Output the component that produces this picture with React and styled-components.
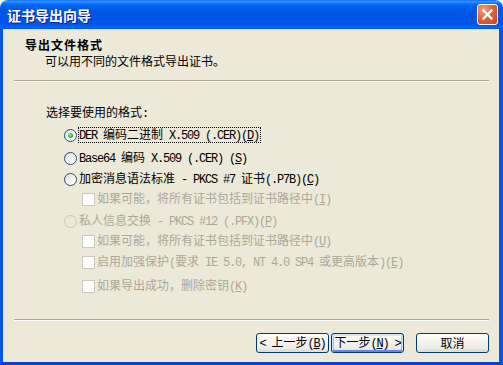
import React from 'react'
import styled, { createGlobalStyle } from 'styled-components'

const GlobalStyle = createGlobalStyle`
  html, body {
    margin: 0;
    padding: 0;
    background: #fff;
  }
  body {
    font-family: "Noto Sans CJK SC", sans-serif;
    font-size: 12px;
  }
`

const CJK = /([\u2e80-\u9fff\u3000-\u303f\uff00-\uffef]+)/

const Latin = styled.span`
  font-family: "Liberation Mono", "Noto Sans CJK SC", monospace;
  font-size: 12px;
  letter-spacing: -1.2px;
`

const mixed = (str) =>
  str
    .split(CJK)
    .filter(Boolean)
    .map((part, i) =>
      CJK.test(part) ? <span key={i}>{part}</span> : <Latin key={i}>{part}</Latin>
    )

// "&X" marks the mnemonic letter, like a Windows resource string
const Caption = ({ text }) => {
  const i = text.indexOf('&')
  if (i < 0) return <>{mixed(text)}</>
  return (
    <>
      {mixed(text.slice(0, i))}
      <u>{mixed(text[i + 1])}</u>
      {mixed(text.slice(i + 2))}
    </>
  )
}

const Window = styled.div`
  width: 503px;
  height: 365px;
  display: flex;
  flex-direction: column;
  border-radius: 8px 8px 0 0;
  overflow: hidden;
`

const TitleBar = styled.div`
  height: 29px;
  flex: none;
  display: flex;
  align-items: center;
  justify-content: space-between;
  padding: 0 5px 0 7px;
  background: linear-gradient(
    to bottom,
    #0058ee 0px,
    #3a93ff 1px,
    #288eff 2px,
    #127dff 3px,
    #036ffc 4px,
    #0262ee 6px,
    #0057e5 10px,
    #0054e3 18px,
    #0055eb 24px,
    #005bf5 26px,
    #026afe 27px,
    #0062ef 28px,
    #0052d6 29px
  );
`

const Title = styled.span`
  color: #fff;
  font-weight: bold;
  font-size: 14px;
  line-height: 18px;
  text-shadow: 1px 1px 0 #0a1e8c;
`

const CloseButton = styled.div`
  width: 21px;
  height: 21px;
  box-sizing: border-box;
  border: 1px solid #fff;
  border-radius: 3px;
  display: flex;
  align-items: center;
  justify-content: center;
  background: radial-gradient(circle at 30% 25%, #f0a085 0%, #e2643f 45%, #c8401c 100%);
`

const Body = styled.div`
  flex: 1;
  display: flex;
  flex-direction: column;
  background: #ece9d8;
  border-left: 3px solid #0855e5;
  border-right: 4px solid #0855e5;
  border-bottom: 3px solid #0843cf;
`

const Header = styled.div`
  padding: 8px 0 0 22px;
  line-height: 16px;
`

const HeaderTitle = styled.div`
  font-weight: bold;
  letter-spacing: 1px;
`

const HeaderSub = styled.div`
  padding-left: 20px;
`

const Separator = styled.div`
  height: 0;
  border-top: 1px solid #aca899;
  border-bottom: 1px solid #fff;
  margin: ${(p) => p.$mt}px 10px 0 11px;
`

const Content = styled.div`
  display: flex;
  flex-direction: column;
  padding-top: 22px;
`

const GroupLabel = styled.div`
  height: 16px;
  line-height: 16px;
  padding-left: 43px;
`

const Row = styled.div`
  display: flex;
  align-items: center;
  gap: 2px;
  height: 16px;
  line-height: 16px;
  white-space: nowrap;
  margin-top: ${(p) => p.$mt}px;
  padding-left: ${(p) => p.$indent}px;
  color: ${(p) => (p.$disabled ? '#aca899' : '#000')};
`

const RadioCircle = styled.span`
  position: relative;
  flex: none;
  width: 13px;
  height: 13px;
  box-sizing: border-box;
  border-radius: 50%;
  border: 1px solid ${(p) => (p.$disabled ? '#cac8bb' : '#1c5180')};
  background: ${(p) =>
    p.$disabled ? '#ece9d8' : 'linear-gradient(135deg, #dcdcd7 0%, #ffffff 75%)'};

  &::after {
    content: '';
    display: ${(p) => (p.$checked ? 'block' : 'none')};
    position: absolute;
    left: 3px;
    top: 3px;
    width: 5px;
    height: 5px;
    border-radius: 50%;
    background: radial-gradient(circle at 40% 40%, #a8eda8 0%, #2fb62f 55%, #1a8a1a 100%);
  }
`

const CheckBox = styled.span`
  flex: none;
  width: 13px;
  height: 13px;
  box-sizing: border-box;
  border: 1px solid ${(p) => (p.$disabled ? '#cac8bb' : '#1c5180')};
  background: #fff;
`

const Text = styled.span`
  display: inline-block;
  line-height: 11px;
  border: 1px solid transparent;
  margin-left: -1px;
  padding: 0 1px 0 0;
  border-color: ${(p) => (p.$focus ? '#000' : 'transparent')};
  border-style: dotted;
`

const Footer = styled.div`
  margin-top: auto;
  display: flex;
  flex-direction: column;
  padding-bottom: 9px;
`

const Buttons = styled.div`
  display: flex;
  justify-content: flex-end;
  gap: 2px;
  margin-top: 12px;
  padding-right: 10px;
`

const Button = styled.button`
  width: 73px;
  height: 20px;
  box-sizing: border-box;
  padding: 0;
  margin-left: ${(p) => p.$ml || 0}px;
  border: 1px solid #003c74;
  border-radius: 3px;
  font-family: inherit;
  font-size: 12px;
  line-height: 16px;
  color: #000;
  white-space: nowrap;
  background: linear-gradient(to bottom, #ffffff 0%, #f6f5f0 35%, #ecebe5 80%, #d8d3c8 100%);
  box-shadow: ${(p) =>
    p.$default
      ? 'inset 0 1px 0 1px #cee7ff, inset 0 -1px 0 1px #6982ee, inset 0 0 0 2px #a4c0ef'
      : 'inset 0 -1px 0 #e3e0d6'};
`

const options = [
  { kind: 'radio', text: 'DER 编码二进制 X.509 (.CER)(&D)', checked: true, focus: true, mt: 7 },
  { kind: 'radio', text: 'Base64 编码 X.509 (.CER) (&S)', mt: 7 },
  { kind: 'radio', text: '加密消息语法标准 - PKCS #7 证书(.P7B)(&C)', mt: 5 },
  { kind: 'check', text: '如果可能，将所有证书包括到证书路径中(&I)', disabled: true, mt: 4 },
  { kind: 'radio', text: '私人信息交换 - PKCS #12 (.PFX)(&P)', disabled: true, mt: 6 },
  { kind: 'check', text: '如果可能，将所有证书包括到证书路径中(&U)', disabled: true, mt: 4 },
  { kind: 'check', text: '启用加强保护(要求 IE 5.0, NT 4.0 SP4 或更高版本)(&E)', disabled: true, mt: 5 },
  { kind: 'check', text: '如果导出成功，删除密钥(&K)', disabled: true, mt: 8 },
]

const CloseIcon = () => (
  <svg width="11" height="11" viewBox="0 0 11 11">
    <path d="M1.5 1.5 L9.5 9.5 M9.5 1.5 L1.5 9.5" stroke="#fff" strokeWidth="2.2" strokeLinecap="square" />
  </svg>
)

export default function App() {
  return (
    <>
      <GlobalStyle />
      <Window>
        <TitleBar>
          <Title>证书导出向导</Title>
          <CloseButton>
            <CloseIcon />
          </CloseButton>
        </TitleBar>
        <Body>
          <Header>
            <HeaderTitle>导出文件格式</HeaderTitle>
            <HeaderSub>可以用不同的文件格式导出证书。</HeaderSub>
          </Header>
          <Separator $mt={11} />
          <Content>
            <GroupLabel>
              <Caption text="选择要使用的格式:" />
            </GroupLabel>
            {options.map((o, i) => (
              <Row
                key={i}
                $mt={o.mt}
                $indent={o.kind === 'radio' ? 61 : 79}
                $disabled={o.disabled}
              >
                {o.kind === 'radio' ? (
                  <RadioCircle $checked={o.checked} $disabled={o.disabled} />
                ) : (
                  <CheckBox $disabled={o.disabled} />
                )}
                <Text $focus={o.focus}>
                  <Caption text={o.text} />
                </Text>
              </Row>
            ))}
          </Content>
          <Footer>
            <Separator $mt={0} />
            <Buttons>
              <Button>
                <Caption text="< 上一步(&B)" />
              </Button>
              <Button $default>
                <Caption text="下一步(&N) >" />
              </Button>
              <Button $ml={10}>
                <Caption text="取消" />
              </Button>
            </Buttons>
          </Footer>
        </Body>
      </Window>
    </>
  )
}
